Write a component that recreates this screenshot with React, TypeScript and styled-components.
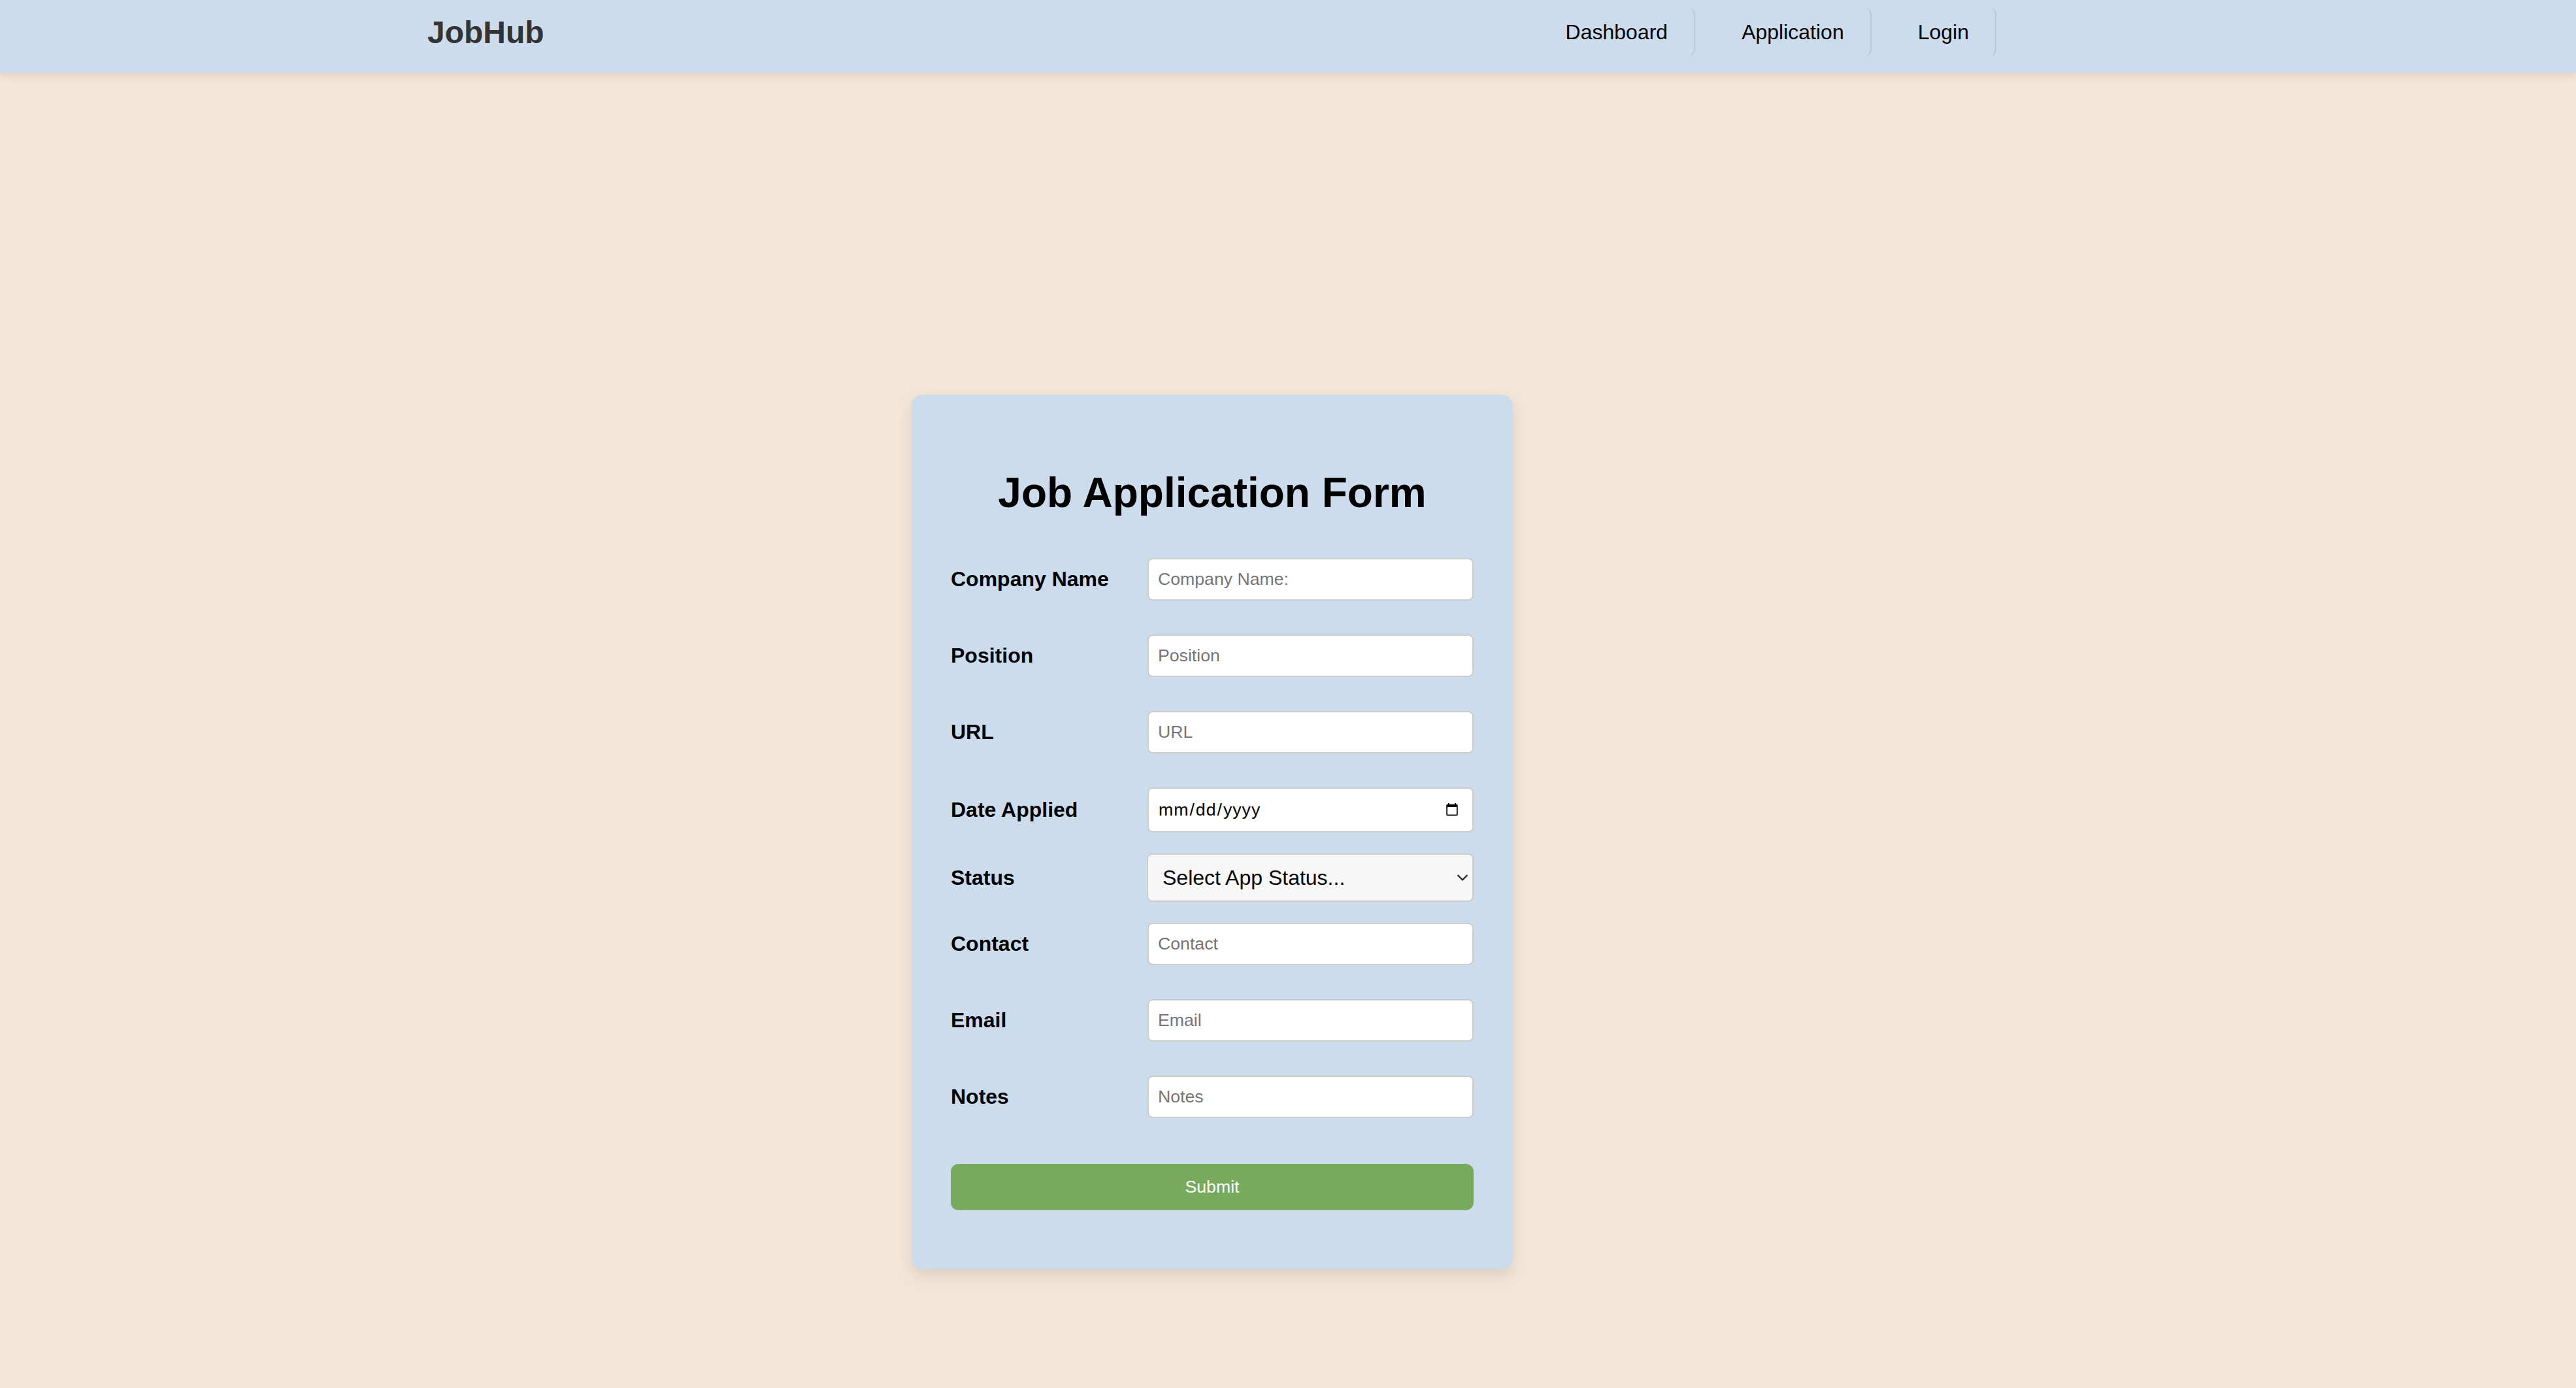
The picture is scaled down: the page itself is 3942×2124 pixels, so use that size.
import React from "react";
import styled, { createGlobalStyle } from "styled-components";

const GlobalStyle = createGlobalStyle`
  html, body {
    margin: 0;
    padding: 0;
    background: #f4e6d7;
    font-family: "Liberation Sans", Arial, Helvetica, sans-serif;
  }
  * { box-sizing: border-box; }
`;

const Page = styled.div`
  min-height: 100vh;
  background: #f4e6d7;
`;

const Header = styled.header`
  height: 111px;
  padding: 11px 887px 0 654px;
  background: #ccdcec;
  box-shadow: 0 4px 12px rgba(0, 0, 0, 0.1);
  display: flex;
  align-items: flex-start;
  justify-content: space-between;
  position: relative;
  z-index: 1;
`;

const Brand = styled.div`
  height: 76px;
  display: flex;
  align-items: center;
  font-size: 48px;
  font-weight: 700;
  color: #333;
`;

const NavList = styled.nav`
  display: flex;
  gap: 31px;
`;

const NavLink = styled.a`
  height: 76px;
  padding: 0 40px;
  display: flex;
  align-items: center;
  font-size: 32px;
  color: #000;
  text-decoration: none;
  border-right: 2px solid #bdc6cf;
  border-radius: 12px;
`;

const Main = styled.main`
  display: flex;
  justify-content: center;
  padding: 493px 232px 0 0;
`;

const Card = styled.section`
  width: 920px;
  padding: 60px 60px 90px;
  background: #ccdcec;
  border-radius: 16px;
  box-shadow: 0 10px 22px rgba(0, 0, 0, 0.1);
`;

const Title = styled.h2`
  margin: 53px 0 43px;
  text-align: center;
  font-size: 64px;
  font-weight: 700;
  color: #000;
`;

const Form = styled.form`
  display: flex;
  flex-direction: column;
  gap: 12px;
`;

const Row = styled.div`
  display: grid;
  grid-template-columns: 301px 1fr;
  align-items: center;
`;

const Label = styled.label`
  font-size: 32px;
  font-weight: 700;
  color: #000;
`;

const TextInput = styled.input<{ $h?: number }>`
  width: 100%;
  height: ${(p) => p.$h ?? 65}px;
  margin: 20px 0;
  padding: 0 14px;
  border: 2px solid #cccccc;
  border-radius: 8px;
  background: #fff;
  font-family: "Liberation Sans", Arial, sans-serif;
  font-size: 26.67px;
  color: #000;
  outline: none;
  &::placeholder {
    color: #757575;
  }
  &::-webkit-datetime-edit {
    letter-spacing: 1px;
  }
  &::-webkit-calendar-picker-indicator {
    width: 22px;
    height: 24px;
    margin-right: 4px;
  }
`;

const SelectWrap = styled.div`
  position: relative;
  margin-left: -1px;
`;

const Select = styled.select`
  width: 100%;
  height: 74px;
  padding: 0 40px 0 22px;
  border: 2px solid #cccccc;
  border-radius: 8px;
  background: #f7f7f7;
  font-family: "Liberation Sans", Arial, sans-serif;
  font-size: 32px;
  color: #000;
  appearance: none;
  -webkit-appearance: none;
  outline: none;
`;

const Chevron = styled.svg`
  position: absolute;
  right: 8px;
  top: 50%;
  transform: translateY(-50%);
  pointer-events: none;
`;

const Submit = styled.button`
  margin-top: 38px;
  width: 100%;
  height: 71px;
  border: none;
  border-radius: 12px;
  background: #78aa5e;
  color: #fff;
  font-family: "Liberation Sans", Arial, sans-serif;
  font-size: 26.67px;
  cursor: pointer;
`;

const fields = [
  { id: "company", label: "Company Name", placeholder: "Company Name:" },
  { id: "position", label: "Position", placeholder: "Position" },
  { id: "url", label: "URL", placeholder: "URL" },
];

const fields2 = [
  { id: "contact", label: "Contact", placeholder: "Contact" },
  { id: "email", label: "Email", placeholder: "Email" },
  { id: "notes", label: "Notes", placeholder: "Notes" },
];

export default function App() {
  return (
    <Page>
      <GlobalStyle />
      <Header>
        <Brand>JobHub</Brand>
        <NavList>
          <NavLink href="#">Dashboard</NavLink>
          <NavLink href="#">Application</NavLink>
          <NavLink href="#">Login</NavLink>
        </NavList>
      </Header>
      <Main>
        <Card>
          <Title>Job Application Form</Title>
          <Form onSubmit={(e) => e.preventDefault()}>
            {fields.map((f) => (
              <Row key={f.id}>
                <Label htmlFor={f.id}>{f.label}</Label>
                <TextInput id={f.id} type="text" placeholder={f.placeholder} />
              </Row>
            ))}
            <Row>
              <Label htmlFor="date">Date Applied</Label>
              <TextInput id="date" type="date" $h={69} />
            </Row>
            <Row>
              <Label htmlFor="status">Status</Label>
              <SelectWrap>
                <Select id="status" defaultValue="">
                  <option value="" disabled>
                    Select App Status...
                  </option>
                  <option value="applied">Applied</option>
                  <option value="interview">Interview</option>
                  <option value="offer">Offer</option>
                  <option value="rejected">Rejected</option>
                </Select>
                <Chevron width="18" height="11" viewBox="0 0 18 11">
                  <path d="M1.5 1.5 L9 9 L16.5 1.5" fill="none" stroke="#222" strokeWidth="2.2" />
                </Chevron>
              </SelectWrap>
            </Row>
            {fields2.map((f) => (
              <Row key={f.id}>
                <Label htmlFor={f.id}>{f.label}</Label>
                <TextInput id={f.id} type="text" placeholder={f.placeholder} />
              </Row>
            ))}
            <Submit type="submit">Submit</Submit>
          </Form>
        </Card>
      </Main>
    </Page>
  );
}
